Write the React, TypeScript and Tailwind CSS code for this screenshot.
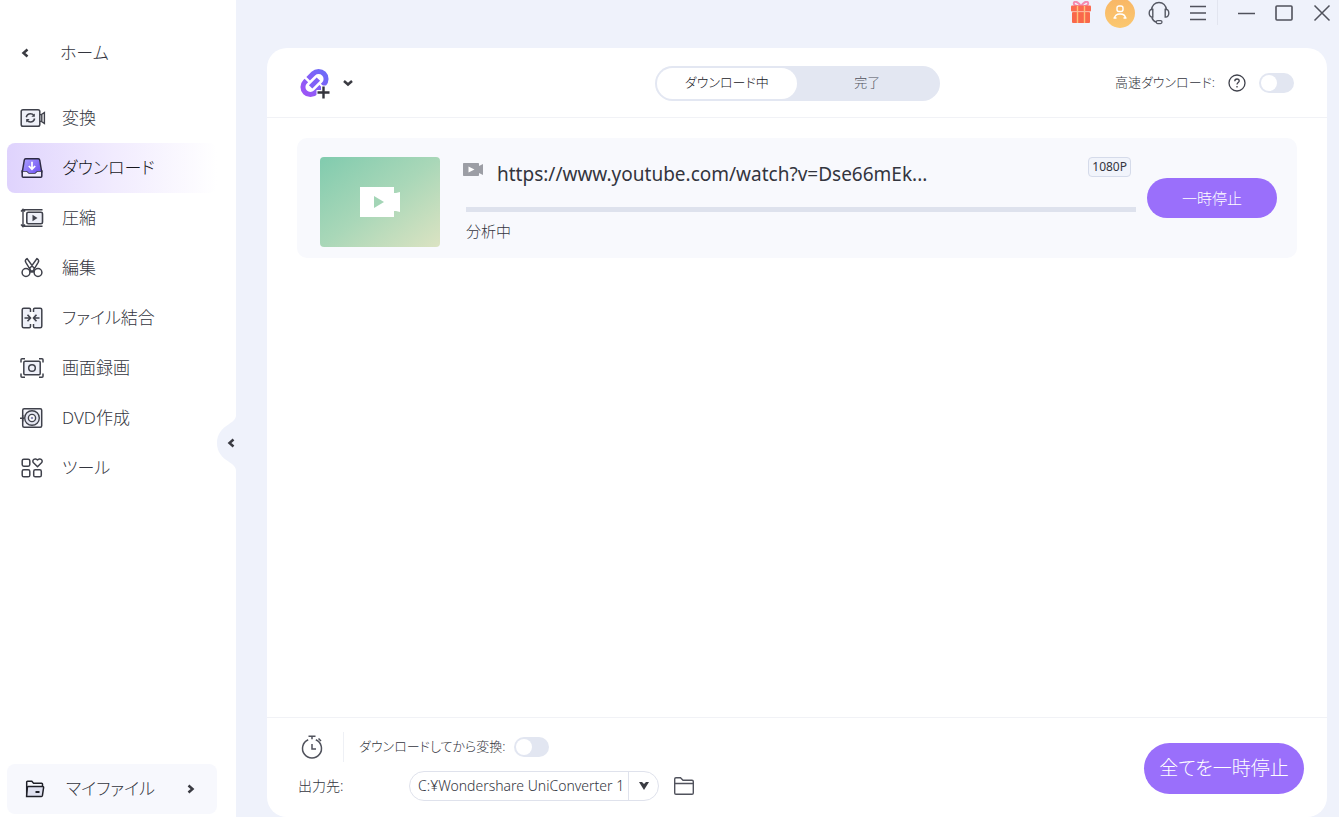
import type { ReactNode } from 'react'

type IconProps = { className?: string }

const ink = '#3f414b'

function Svg({ size = 24, w, h, children }: { size?: number; w?: number; h?: number; children: ReactNode }) {
  const width = w ?? size
  const height = h ?? size
  return (
    <svg width={width} height={height} viewBox={`0 0 ${width} ${height}`} fill="none" className="shrink-0" aria-hidden="true">
      {children}
    </svg>
  )
}

function ConvertIcon() {
  return (
    <Svg w={26}>
      <rect x="1.2" y="3.7" width="18.6" height="16.6" rx="1.8" fill="#eef0f8" stroke={ink} strokeWidth="1.5" />
      <path d="M20 8.6h1.4l3-2v10.8l-3-2H20M21.8 9v6" stroke={ink} strokeWidth="1.4" />
      <path d="M6.3 11.2c.5-2.2 2-3.4 4.1-3.4 1.5 0 2.7.6 3.5 1.7M14.6 12.5c-.5 2.3-2 3.5-4.200 3.5-1.500 0-2.700-.6-3.500-1.700" stroke={ink} strokeWidth="1.6" />
      <path d="M14.8 7.4v3.4h-3.400zM6.200 16.500v-3.400h3.400z" fill={ink} />
    </Svg>
  )
}

function DownloadIcon() {
  return (
    <Svg>
      <defs>
        <linearGradient id="tray" x1="4" y1="4" x2="20" y2="17" gradientUnits="userSpaceOnUse">
          <stop stopColor="#a99cff" />
          <stop offset="1" stopColor="#6d4ff0" />
        </linearGradient>
      </defs>
      <path d="M2.2 15h4.600l2.200 2h6l2.200-2h4.600v5.200a1 1 0 0 1-1 1H3.200a1 1 0 0 1-1-1z" fill="#efeafd" stroke="#2d2a44" strokeWidth="1.5" />
      <path d="M5 2.800h14l2.300 12.200h-4.200L15 17H9l-2.100-2H2.700z" fill="url(#tray)" />
      <path d="M2.200 16.500 4.300 4a1.500 1.500 0 0 1 1.500-1.300h12.400A1.500 1.500 0 0 1 19.700 4l2.100 12.500" stroke="#2d2a44" strokeWidth="1.5" />
      <path d="M12 5.800v7M8.800 10l3.200 3.200 3.200-3.200" stroke="#fff" strokeWidth="1.7" />
    </Svg>
  )
}

function CompressIcon() {
  return (
    <Svg>
      <path d="M3 3.500v17.500M1 5.500l2-2.300 2 2.300M1 18.500l2 2.300 2-2.300M4 3.700h18.500M4 20.300h18.500" stroke={ink} strokeWidth="1.4" />
      <rect x="6.8" y="6.3" width="15.7" height="11.4" rx="1.5" fill="#eef0f8" stroke={ink} strokeWidth="1.6" />
      <path d="M12.500 8.800v6.400l5-3.200z" fill={ink} />
    </Svg>
  )
}

function CutIcon() {
  return (
    <Svg>
      <circle cx="6" cy="16.5" r="3.9" stroke={ink} strokeWidth="1.5" />
      <circle cx="18" cy="16.5" r="3.9" stroke={ink} strokeWidth="1.5" />
      <path d="m9 13.700 8-11.200c1.700 1 2 2.500 1.200 3.900L12.300 16.200M15 13.700 7 2.500C5.300 3.500 5 5 5.800 6.400l5.900 9.800" stroke={ink} strokeWidth="1.4" strokeLinejoin="round" />
      <path d="M10 15.500h4" stroke={ink} strokeWidth="2.2" />
    </Svg>
  )
}

function MergeIcon() {
  return (
    <Svg>
      <path d="M10.500 6V3.500c0-.8-.5-1.200-1.200-1.200H3.800c-1 0-1.600.6-1.600 1.500v16.400c0 .9.600 1.500 1.600 1.500h5.500c.7 0 1.200-.4 1.200-1.200V18M13.500 6V3.500c0-.8.5-1.200 1.200-1.200h5.500c1 0 1.600.6 1.600 1.500v16.400c0 .9-.6 1.500-1.600 1.500h-5.500c-.7 0-1.200-.4-1.200-1.200V18" fill="#eef0f8" stroke={ink} strokeWidth="1.5" />
      <path d="M4.500 12h5.500M7.500 8.800l3 3.200-3 3.200M19.500 12H14M16.500 8.800l-3 3.200 3 3.200" stroke={ink} strokeWidth="1.6" />
    </Svg>
  )
}

function RecordIcon() {
  return (
    <Svg>
      <path d="M1 6.500V3.700c0-.6.4-1 1-1h3M19 2.700h3c.6 0 1 .4 1 1v2.800M1 17.500v2.800c0 .6.4 1 1 1h3M19 21.300h3c.6 0 1-.4 1-1v-2.800" stroke={ink} strokeWidth="1.5" />
      <rect x="3.8" y="5.3" width="16.4" height="13.4" rx="1.2" fill="#eef0f8" stroke={ink} strokeWidth="1.5" />
      <circle cx="12" cy="12" r="3.3" stroke={ink} strokeWidth="1.5" />
    </Svg>
  )
}

function DiscIcon() {
  return (
    <Svg>
      <rect x="2.7" y="2.7" width="19" height="18.6" rx="1.5" fill="#f4f5fb" stroke={ink} strokeWidth="1.5" />
      <circle cx="12" cy="12" r="7.3" fill="#e4e6f1" stroke={ink} strokeWidth="1.4" />
      <circle cx="12" cy="12" r="3.6" fill="#fff" stroke={ink} strokeWidth="1.4" />
      <circle cx="12" cy="12" r="1.3" fill="#8d8fb8" />
      <path d="M0 12.300h4M2.700 9v6.500" stroke={ink} strokeWidth="1.5" />
    </Svg>
  )
}

function ToolsIcon() {
  return (
    <Svg>
      <rect x="2.2" y="3.2" width="7.6" height="7" rx="1.6" stroke={ink} strokeWidth="1.5" />
      <rect x="2.2" y="13.8" width="7.6" height="7" rx="1.6" stroke={ink} strokeWidth="1.5" />
      <rect x="13.7" y="13.8" width="7.6" height="7" rx="1.6" stroke={ink} strokeWidth="1.5" />
      <path d="m17.500 10.700-4-3.900c-1-1.100-.8-2.500.1-3.300 1.200-1 2.900-.7 3.900.5 1-1.200 2.700-1.500 3.900-.5.9.8 1.100 2.200.1 3.300z" stroke={ink} strokeWidth="1.5" strokeLinejoin="round" />
    </Svg>
  )
}

function MyFilesIcon() {
  return (
    <Svg w={20} h={18}>
      <path d="M1.700 16V2c0-.5.3-.8.8-.8h4.300l1.800 2h8c.6 0 .9.3.9.9V6" stroke="#1f2028" strokeWidth="1.5" />
      <path d="M3.300 6.500h14.300c.7 0 1.100.5 1 1.100l-1.200 8.100c-.1.500-.5.8-1 .8H1.600L2.400 7.300c.1-.5.4-.8.900-.8z" fill="#dfe1ef" stroke="#1f2028" strokeWidth="1.5" />
      <path d="M10.500 12h4" stroke="#1f2028" strokeWidth="2" />
    </Svg>
  )
}

function Chevron({ dir, className = '' }: { dir: 'left' | 'right' | 'down' } & IconProps) {
  const path = { left: 'M7.500 1.500 3.500 5l4 3.500', right: 'M2.500 1.500l4 3.500-4 3.500', down: 'M1 3 5 6.500 9 3' }[dir]
  return (
    <svg width="10" height="10" viewBox="0 0 10 10" fill="none" className={`shrink-0 ${className}`} aria-hidden="true">
      <path d={path} stroke="#3a3b42" strokeWidth="2.5" />
    </svg>
  )
}

function GiftIcon() {
  return (
    <Svg w={22} h={24}>
      <path d="M10.500 5.500C6 5.500 3 4 4 1.500c1-2 5 0 7 4 2-4 6-6 7-4 1 2.500-2 4-6.500 4z" stroke="#f58bb0" strokeWidth="2" />
      <rect x="1" y="4.500" width="20" height="6" rx="1" fill="#fb6a50" />
      <rect x="2" y="11" width="18" height="11" rx="1" fill="#f9684b" />
      <path d="M7.500 5v17M14.500 5v17" stroke="#ffc078" strokeWidth="1.4" />
      <path d="M2 10.700h18" stroke="#ffb79c" strokeWidth=".8" />
    </Svg>
  )
}

function UserIcon() {
  return (
    <Svg size={16}>
      <rect x="5" y="1" width="6" height="5.5" rx="2" stroke="#fff" strokeWidth="1.4" />
      <path d="M2.500 13.500c0-2.500 2-4.500 5.500-4.500s5.500 2 5.500 4.500M1.500 13h3M11.500 13h3" stroke="#fff" strokeWidth="1.4" />
    </Svg>
  )
}

function HeadsetIcon() {
  return (
    <Svg w={22} h={24}>
      <path d="M3.500 9C4 4.500 7 1.500 11 1.500S18 4.500 18.500 9" stroke="#555863" strokeWidth="1.5" />
      <path d="M4.800 8.300v7.800c-2 .3-3.600-1-3.600-3.900s1.600-4.200 3.600-3.900zM17.200 8.300v7.800c2 .3 3.600-1 3.600-3.900s-1.600-4.200-3.600-3.900z" stroke="#555863" strokeWidth="1.4" />
      <path d="M3.800 16.200c.7 2.600 2.200 4.200 4.700 4.900" stroke="#555863" strokeWidth="1.4" />
      <rect x="8.2" y="19.6" width="5.8" height="3" rx="1.5" stroke="#555863" strokeWidth="1.3" />
    </Svg>
  )
}

function AddLinkIcon() {
  return (
    <Svg w={30} h={32}>
      <defs>
        <linearGradient id="link" x1="2" y1="15" x2="28" y2="15" gradientUnits="userSpaceOnUse">
          <stop stopColor="#9a55f6" />
          <stop offset="1" stopColor="#6f69f8" />
        </linearGradient>
      </defs>
      <g transform="translate(-.5 1) rotate(-45 15 15)">
        <path d="M17 22.500H9.250a7.500 7.500 0 0 1 0-15H11" stroke="url(#link)" strokeWidth="5" />
        <path d="M13.500 7.500h7.250a7.500 7.500 0 0 1 0 15H19" stroke="url(#link)" strokeWidth="5" />
        <rect x="9.5" y="12.6" width="11" height="4.8" fill="#8060f7" />
      </g>
      <path d="M23.500 18.500V32M16.500 25.500H30" stroke="#fff" strokeWidth="5" />
      <path d="M23.500 19.500v12M17.500 25.500h12" stroke="#34353c" strokeWidth="2.4" />
    </Svg>
  )
}

function TimerIcon() {
  return (
    <Svg>
      <path d="M8.200 4.700a9.500 9.500 0 1 0 7.600 0" stroke="#50525c" strokeWidth="1.5" />
      <path d="M8.500 1.300h7M12 1.300v3M18.500 3.500l2.500 2.500M12 9v5h4" stroke="#50525c" strokeWidth="1.5" />
    </Svg>
  )
}

function FolderIcon() {
  return (
    <Svg w={22} h={20}>
      <path d="M1.700 17V3c0-.8.5-1.300 1.300-1.300h4.500L10 4.200h9c.8 0 1.300.5 1.300 1.300V17c0 .8-.5 1.300-1.300 1.300H3c-.8 0-1.300-.5-1.300-1.300zM1.700 7.500h18.600" stroke="#50525c" strokeWidth="1.4" />
    </Svg>
  )
}

const navItems = [
  { label: '変換', icon: <ConvertIcon /> },
  { label: 'ダウンロード', icon: <DownloadIcon />, active: true },
  { label: '圧縮', icon: <CompressIcon /> },
  { label: '編集', icon: <CutIcon /> },
  { label: 'ファイル結合', icon: <MergeIcon /> },
  { label: '画面録画', icon: <RecordIcon /> },
  { label: 'DVD作成', icon: <DiscIcon /> },
  { label: 'ツール', icon: <ToolsIcon /> },
]

function Sidebar() {
  return (
    <aside className="relative flex w-[236px] shrink-0 flex-col bg-white px-[7px] pb-[3px]">
      <a href="#home" className="mt-7 flex h-[50px] items-center gap-[30px] pl-[13px] text-[17px]">
        <Chevron dir="left" />
        ホーム
      </a>
      <nav className="mt-[15px]">
        <ul>
          {navItems.map((item) => (
            <li key={item.label}>
              <a
                href={`#${item.label}`}
                aria-current={item.active ? 'page' : undefined}
                className={`flex h-[50px] w-[210px] items-center gap-[18px] rounded-lg pl-[13px] text-[17px] ${
                  item.active ? 'bg-linear-to-r from-[#dfd3fd] via-[#f1ebfe] to-white text-[#17171d]' : ''
                }`}
              >
                <span className="flex w-6">{item.icon}</span>
                {item.label}
              </a>
            </li>
          ))}
        </ul>
      </nav>
      <a href="#files" className="mt-auto flex h-[50px] w-[210px] items-center rounded-lg bg-[#f7f8fd] pl-[18px] pr-[21px] text-[17px]">
        <MyFilesIcon />
        <span className="ml-[21px] flex-1">マイファイル</span>
        <Chevron dir="right" />
      </a>
      <button type="button" aria-label="サイドバーを閉じる" className="absolute right-0 top-[415px] flex h-14 w-[19px] items-center justify-end">
        <svg width="19" height="56" viewBox="0 0 19 56" className="absolute inset-0" aria-hidden="true">
          <path d="M19 0c0 5-4 7-9 10.500C4 14.500 0 20 0 28s4 13.500 10 17.500C15 49 19 51 19 56z" fill="#eff2fb" />
        </svg>
        <Chevron dir="left" className="relative" />
      </button>
    </aside>
  )
}

function TitleBar() {
  return (
    <header className="flex h-[25px] shrink-0 items-center justify-end pr-2">
      <button type="button" aria-label="ギフト"><GiftIcon /></button>
      <button type="button" aria-label="アカウント" className="ml-[13px] flex size-[30px] shrink-0 items-center justify-center rounded-full bg-linear-to-b from-[#f8b665] to-[#fbc870]">
        <UserIcon />
      </button>
      <button type="button" aria-label="サポート" className="ml-[13px]"><HeadsetIcon /></button>
      <button type="button" aria-label="メニュー" className="ml-[19px]">
        <Svg size={18}><path d="M1 2.500h16M1 9h16M1 15.500h16" stroke="#50525c" strokeWidth="1.5" /></Svg>
      </button>
      <span className="ml-[10px] h-full w-px bg-[#e2e5ef]" />
      <div className="ml-[19px] flex gap-5">
        <button type="button" aria-label="最小化"><Svg size={18}><path d="M1 9.500h17" stroke="#50525c" strokeWidth="1.5" /></Svg></button>
        <button type="button" aria-label="最大化"><Svg size={18}><rect x="1" y="2" width="16" height="14" rx="1" stroke="#50525c" strokeWidth="1.6" /></Svg></button>
        <button type="button" aria-label="閉じる"><Svg size={18}><path d="m1.500 1.500 15 15M16.500 1.500l-15 15" stroke="#50525c" strokeWidth="1.5" /></Svg></button>
      </div>
    </header>
  )
}

function Toggle({ id }: { id: string }) {
  return (
    <input
      id={id}
      type="checkbox"
      role="switch"
      className="h-5 w-[35px] shrink-0 appearance-none rounded-full bg-[#e2e6f1] p-[2px] before:block before:size-4 before:rounded-full before:bg-white checked:bg-[#9a6ffb] checked:before:ml-auto"
    />
  )
}

function Toolbar() {
  return (
    <div className="flex h-[70px] shrink-0 items-center border-b border-[#f1f2f6] pl-[33px] pr-[33px] pt-px">
      <div className="flex flex-1 items-center">
        <button type="button" aria-label="リンクを追加" className="flex items-center gap-[13px]">
          <AddLinkIcon />
          <Chevron dir="down" />
        </button>
      </div>
      <div role="tablist" className="flex h-[35px] w-[285px] rounded-full bg-[#e3e7f2] p-[2px] text-[13px]">
        <button type="button" role="tab" aria-selected="true" className="flex-1 rounded-full bg-white text-[#17171d]">ダウンロード中</button>
        <button type="button" role="tab" aria-selected="false" className="flex-1 text-[#50525c]">完了</button>
      </div>
      <div className="flex flex-1 items-center justify-end">
        <label htmlFor="fast" className="text-[13px]">高速ダウンロード:</label>
        <button type="button" aria-label="ヘルプ" className="mx-[13px]">
          <Svg size={18}>
            <circle cx="9" cy="9" r="8" stroke={ink} strokeWidth="1.3" />
            <path d="M6.800 7.200c0-1.400.9-2.200 2.200-2.200s2.200.8 2.200 2c0 1.500-2.200 1.700-2.200 3.500M9 12v1.400" stroke={ink} strokeWidth="1.3" />
          </Svg>
        </button>
        <Toggle id="fast" />
      </div>
    </div>
  )
}

function DownloadItem() {
  return (
    <article className="flex h-[120px] items-center rounded-[10px] bg-[#f8f9fd] pl-[23px] pr-5">
      <div className="mt-2 flex h-[90px] w-[120px] shrink-0 items-center justify-center rounded bg-linear-to-br from-[#80cbae] via-[#a9d7b8] to-[#dbe3c2]">
        <Svg w={40} h={30}>
          <path d="M0 0h34v6h2l4-1v20l-4-1h-2v6H0z" fill="#fff" />
          <path d="M14 9v12l10-6z" fill="#a3d5b6" />
        </Svg>
      </div>
      <div className="ml-[26px] mt-2 flex h-[90px] min-w-0 flex-1 flex-col">
        <div className="flex h-[50px] items-start">
          <span className="-ml-[3px] mt-[6px]">
            <Svg w={20} h={13}>
              <path d="M1 0h14c.6 0 1 .4 1 1v2l4-2v11l-4-2v2c0 .6-.4 1-1 1H1c-.6 0-1-.4-1-1V1c0-.6.4-1 1-1z" fill="#9c9ea5" />
              <path d="M5.500 3.500v6l6-3z" fill="#fff" />
            </Svg>
          </span>
          <h2 className="ml-[14px] flex-1 truncate text-[19px] font-normal leading-[34px]">https://www.youtube.com/watch?v=Dse66mEk...</h2>
          <span className="mr-[5px] rounded border border-[#d5dbea] bg-[#f1f4fb] px-[3px] text-xs font-normal leading-[18px]">1080P</span>
        </div>
        <div role="progressbar" aria-label="分析中" className="h-[5px] bg-[#dee2ed]" />
        <p className="mt-[9px] text-[15px] leading-5">分析中</p>
      </div>
      <button type="button" className="ml-[11px] h-10 w-[130px] shrink-0 rounded-full bg-[#9a6ffb] text-[15px] text-white">一時停止</button>
    </article>
  )
}

function Footer() {
  return (
    <footer className="flex h-[100px] shrink-0 items-center border-t border-[#f1f2f6] pl-[31px] pr-[23px] pt-[2px]">
      <div className="flex flex-1 flex-col gap-[9px] pb-1">
        <div className="flex h-[30px] items-center">
          <button type="button" aria-label="スケジュール" className="ml-[2px]"><TimerIcon /></button>
          <span className="ml-[19px] h-full w-px bg-[#eef0f5]" />
          <label htmlFor="convert" className="ml-[15px] mr-2 text-[13px]">ダウンロードしてから変換:</label>
          <Toggle id="convert" />
        </div>
        <div className="flex h-[30px] items-center">
          <label htmlFor="output" className="w-[111px] text-sm">出力先:</label>
          <div className="relative flex h-[30px] w-[250px]">
            <select id="output" className="w-full appearance-none rounded-full border border-[#dfe2ec] bg-white pl-2 pr-[31px] text-sm">
              <option>C:¥Wondershare UniConverter 1</option>
            </select>
            <span className="pointer-events-none absolute inset-y-px right-0 flex w-[31px] items-center justify-center border-l border-[#dfe2ec]">
              <svg width="10" height="8" viewBox="0 0 10 8" aria-hidden="true">
                <path d="M0 0h3l2 2 2-2h3L5 8z" fill="#3a3b42" />
              </svg>
            </span>
          </div>
          <button type="button" aria-label="フォルダーを開く" className="ml-[14px]"><FolderIcon /></button>
        </div>
      </div>
      <button type="button" className="h-[51px] w-[160px] rounded-full bg-[#9a6ffb] text-[19px] text-white">全てを一時停止</button>
    </footer>
  )
}

export default function App() {
  return (
    <div className="flex min-h-screen bg-[#eff2fb] font-['Noto_Sans','Noto_Sans_CJK_JP',sans-serif] font-light text-[#33353e] [font-feature-settings:'palt']">
      <Sidebar />
      <div className="flex min-w-0 flex-1 flex-col">
        <TitleBar />
        <main className="ml-[31px] mr-3 mt-[23px] flex flex-1 flex-col rounded-[20px] bg-white">
          <Toolbar />
          <section className="flex-1 px-[30px] pt-5">
            <DownloadItem />
          </section>
          <Footer />
        </main>
      </div>
    </div>
  )
}
